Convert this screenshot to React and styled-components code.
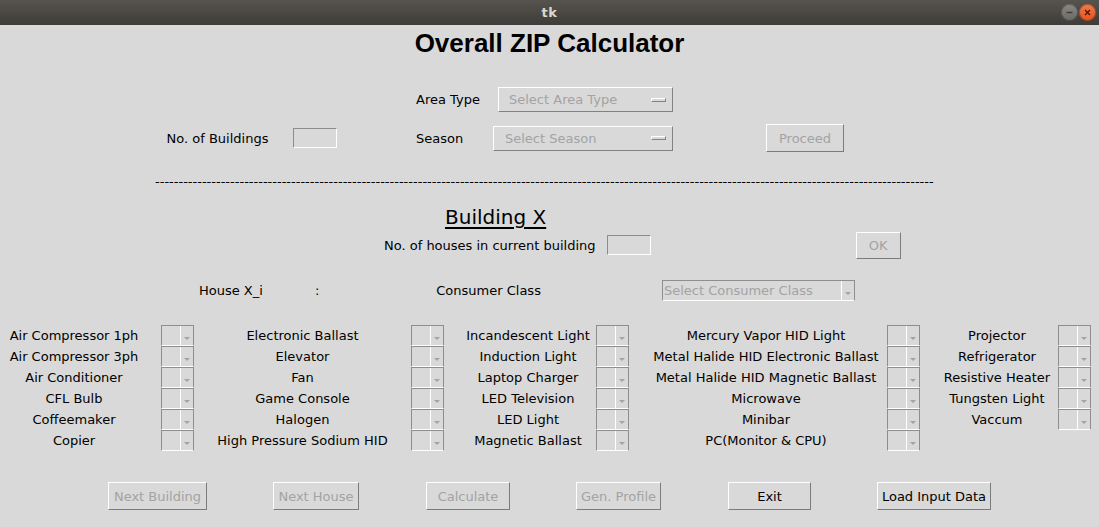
import React from "react";
import styled, { createGlobalStyle } from "styled-components";

const GlobalStyle = createGlobalStyle`
  html, body {
    margin: 0;
    padding: 0;
    background: #d9d9d9;
  }
  body {
    font-family: "DejaVu Sans", "Noto Sans", sans-serif;
    font-size: 13px;
    color: #000;
  }
`;

const Window = styled.div`
  width: 1099px;
  height: 527px;
  overflow: hidden;
  background: #d9d9d9;
  display: flex;
  flex-direction: column;
`;

const TitleBar = styled.div`
  height: 25px;
  flex: none;
  display: grid;
  grid-template-columns: 1fr auto 1fr;
  align-items: center;
  background: linear-gradient(#57544f, #3d3c38);

  .caption {
    grid-column: 2;
    color: #dcd8cf;
    font-weight: bold;
    font-size: 13px;
    letter-spacing: 0.5px;
  }

  .controls {
    grid-column: 3;
    justify-self: end;
    display: flex;
    gap: 1px;
    padding-right: 3px;
  }
`;

const WinButton = styled.div`
  width: 17px;
  height: 17px;
  border-radius: 50%;
  display: flex;
  align-items: center;
  justify-content: center;
  background: ${(p) => p.$bg};
  box-shadow: inset 0 0 0 1px rgba(0, 0, 0, 0.25);
`;

const Heading = styled.h1`
  margin: 3px 0 0;
  height: 30px;
  line-height: 30px;
  text-align: center;
  font-family: "Liberation Sans", Arial, sans-serif;
  font-size: 26px;
  font-weight: bold;
`;

const TopGrid = styled.div`
  display: grid;
  grid-template-columns: 135px 131px 70px 196px 246px;
  grid-template-rows: 25px 28px;
  row-gap: 12px;
  align-items: center;
  margin-top: 29px;
  padding-left: 150px;
`;

const Cell = styled.div`
  grid-column: ${(p) => p.$col};
  grid-row: ${(p) => p.$row};
  justify-self: ${(p) => p.$justify || "start"};
  margin-left: ${(p) => p.$ml || 0}px;
  line-height: 15px;
  white-space: nowrap;
`;

const Entry = styled.div`
  width: 44px;
  height: 20px;
  box-sizing: border-box;
  border: 1px solid;
  border-color: #8c8c8c #ffffff #ffffff #8c8c8c;
`;

const OptionMenu = styled.div`
  width: ${(p) => p.$w}px;
  height: 25px;
  box-sizing: border-box;
  border: 1px solid;
  border-color: #ffffff #828282 #828282 #ffffff;
  display: flex;
  align-items: center;
  justify-content: space-between;
  padding: 0 6px 0 ${(p) => p.$pl}px;
  color: #a3a3a3;
  line-height: 15px;
`;

const Indicator = styled.span`
  width: 15px;
  height: 4px;
  box-sizing: border-box;
  border: 1px solid;
  border-color: #ffffff #828282 #828282 #ffffff;
`;

const Button = styled.div`
  width: ${(p) => p.$w}px;
  height: ${(p) => p.$h || 28}px;
  box-sizing: border-box;
  border: 1px solid;
  border-color: #ffffff #7c7c7c #7c7c7c #ffffff;
  display: flex;
  align-items: center;
  justify-content: center;
  color: ${(p) => (p.$disabled ? "#a3a3a3" : "#000")};
  white-space: nowrap;
`;

const Divider = styled.div`
  margin: 22px 0 0 155px;
  height: 15px;
  line-height: 15px;
  white-space: nowrap;
`;

const BuildingTitle = styled.div`
  margin-top: 16px;
  padding-left: 445px;
  height: 24px;
  line-height: 24px;
  font-size: 20px;
  text-decoration: underline;
  text-underline-offset: 3px;
`;

const FlowRow = styled.div`
  display: flex;
  align-items: center;
  height: ${(p) => p.$h}px;
  margin-top: ${(p) => p.$mt}px;
  padding-left: ${(p) => p.$pl}px;
  line-height: 15px;
  white-space: nowrap;
`;

const Spaced = styled.div`
  margin-left: ${(p) => p.$ml || 0}px;
`;

const Combo = styled.div`
  width: ${(p) => p.$w}px;
  height: 21px;
  box-sizing: border-box;
  border: 1px solid #8e8e8e;
  border-bottom-color: #ffffff;
  display: flex;
  color: #a3a3a3;
  line-height: 19px;

  .value {
    flex: 1;
    padding-left: 1px;
    overflow: hidden;
  }

  .arrow {
    width: 12px;
    border-left: 1px solid #ffffff;
    display: flex;
    align-items: flex-end;
    justify-content: center;
    padding-bottom: 5px;
  }

  .arrow::after {
    content: "";
    border-left: 3px solid transparent;
    border-right: 3px solid transparent;
    border-top: 3px solid #a3a3a3;
  }
`;

const ItemGrid = styled.div`
  display: grid;
  grid-template-columns: 148px 46px 217px 33px 152px 33px 258px 33px 138px 33px;
  grid-template-rows: repeat(6, 21px);
  margin-top: 24px;
`;

const ItemLabel = styled.div`
  grid-column: ${(p) => p.$col};
  grid-row: ${(p) => p.$row};
  padding-left: ${(p) => p.$pl}px;
  text-align: center;
  line-height: 21px;
  white-space: nowrap;
`;

const ItemBox = styled.div`
  grid-column: ${(p) => p.$col};
  grid-row: ${(p) => p.$row};
  justify-self: end;
`;

const ButtonBar = styled.div`
  display: grid;
  grid-template-columns: 155px 162px 142px 159px 143px 186px;
  justify-items: center;
  margin-top: 31px;
  padding-left: 80px;
`;

const appliances = [
  ["Air Compressor 1ph", "Air Compressor 3ph", "Air Conditioner", "CFL Bulb", "Coffeemaker", "Copier"],
  ["Electronic Ballast", "Elevator", "Fan", "Game Console", "Halogen", "High Pressure Sodium HID"],
  ["Incandescent Light", "Induction Light", "Laptop Charger", "LED Television", "LED Light", "Magnetic Ballast"],
  [
    "Mercury Vapor HID Light",
    "Metal Halide HID Electronic Ballast",
    "Metal Halide HID Magnetic Ballast",
    "Microwave",
    "Minibar",
    "PC(Monitor & CPU)",
  ],
  ["Projector", "Refrigerator", "Resistive Heater", "Tungsten Light", "Vaccum"],
];

const labelPad = [0, 0, 16, 16, 16];

const actions = [
  { text: "Next Building", w: 99, disabled: true },
  { text: "Next House", w: 86, disabled: true },
  { text: "Calculate", w: 84, disabled: true },
  { text: "Gen. Profile", w: 85, disabled: true },
  { text: "Exit", w: 83 },
  { text: "Load Input Data", w: 114 },
];

function SmallCombo() {
  return (
    <Combo $w={33}>
      <span className="value" />
      <span className="arrow" />
    </Combo>
  );
}

export default function App() {
  return (
    <>
      <GlobalStyle />
      <Window>
        <TitleBar>
          <span className="caption">tk</span>
          <div className="controls">
            <WinButton $bg="linear-gradient(#8a8884, #6a6864)">
              <svg width="9" height="9" viewBox="0 0 9 9">
                <line x1="1.5" y1="4.5" x2="7.5" y2="4.5" stroke="#3b3a36" strokeWidth="1.4" />
              </svg>
            </WinButton>
            <WinButton $bg="linear-gradient(#f47a4c, #e2531d)">
              <svg width="9" height="9" viewBox="0 0 9 9">
                <path d="M2 2 L7 7 M7 2 L2 7" stroke="#3a1a0c" strokeWidth="1.3" />
              </svg>
            </WinButton>
          </div>
        </TitleBar>

        <Heading>Overall ZIP Calculator</Heading>

        <TopGrid>
          <Cell $col={3} $row={1}>Area Type</Cell>
          <Cell $col={4} $row={1} $ml={12}>
            <OptionMenu $w={175} $pl={10}>
              <span>Select Area Type</span>
              <Indicator />
            </OptionMenu>
          </Cell>
          <Cell $col={1} $row={2} $justify="center">No. of Buildings</Cell>
          <Cell $col={2} $row={2} $ml={8}>
            <Entry />
          </Cell>
          <Cell $col={3} $row={2}>Season</Cell>
          <Cell $col={4} $row={2} $ml={7}>
            <OptionMenu $w={180} $pl={11}>
              <span>Select Season</span>
              <Indicator />
            </OptionMenu>
          </Cell>
          <Cell $col={5} $row={2} $justify="center">
            <Button $w={78} $disabled>Proceed</Button>
          </Cell>
        </TopGrid>

        <Divider>{"-".repeat(166)}</Divider>

        <BuildingTitle>Building X</BuildingTitle>

        <FlowRow $h={28} $mt={2} $pl={384}>
          <span>No. of houses in current building</span>
          <Spaced $ml={11}>
            <Entry />
          </Spaced>
          <Spaced $ml={205}>
            <Button $w={45} $h={27} $disabled>OK</Button>
          </Spaced>
        </FlowRow>

        <FlowRow $h={21} $mt={21} $pl={199}>
          <span>House X_i</span>
          <Spaced $ml={52}>:</Spaced>
          <Spaced $ml={117}>Consumer Class</Spaced>
          <Spaced $ml={121}>
            <Combo $w={193}>
              <span className="value">Select Consumer Class</span>
              <span className="arrow" />
            </Combo>
          </Spaced>
        </FlowRow>

        <ItemGrid>
          {appliances.map((col, c) =>
            col.map((name, r) => (
              <React.Fragment key={name}>
                <ItemLabel $col={c * 2 + 1} $row={r + 1} $pl={labelPad[c]}>
                  {name}
                </ItemLabel>
                <ItemBox $col={c * 2 + 2} $row={r + 1}>
                  <SmallCombo />
                </ItemBox>
              </React.Fragment>
            ))
          )}
        </ItemGrid>

        <ButtonBar>
          {actions.map((a) => (
            <Button key={a.text} $w={a.w} $disabled={a.disabled}>
              {a.text}
            </Button>
          ))}
        </ButtonBar>
      </Window>
    </>
  );
}
